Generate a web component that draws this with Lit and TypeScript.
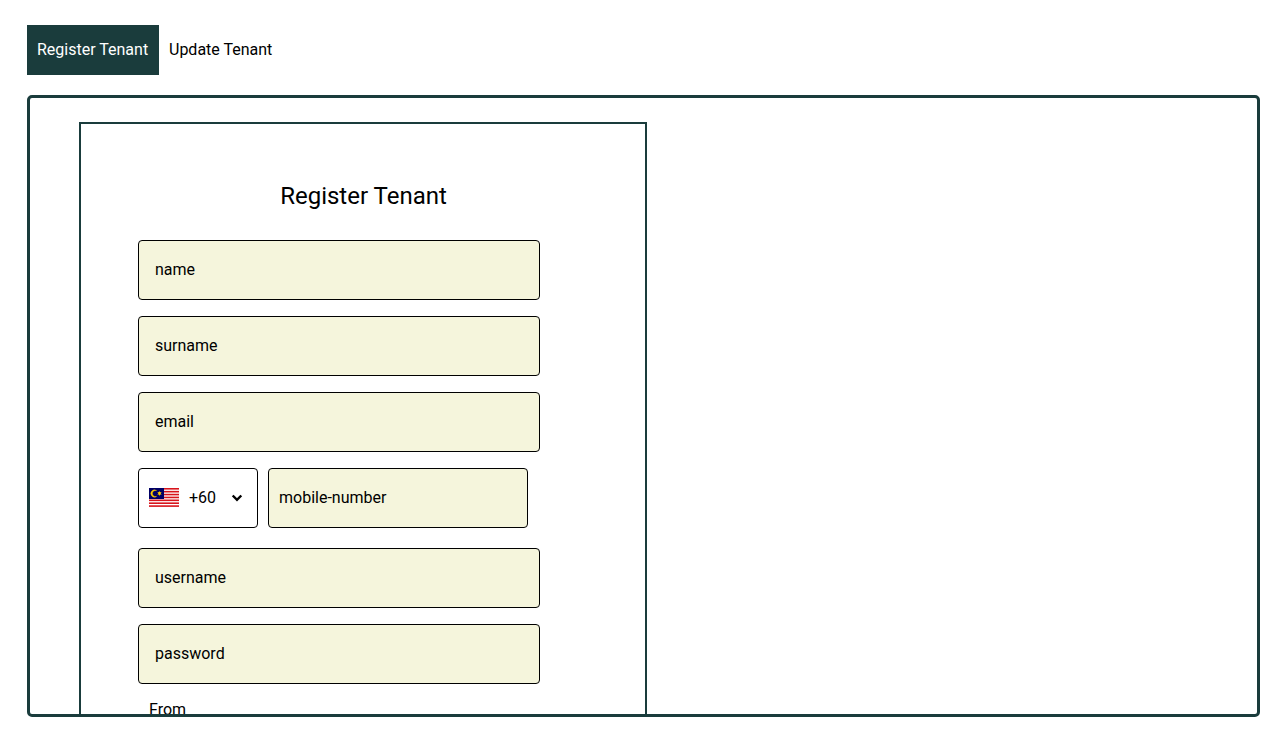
import { LitElement, html, css, svg } from "lit";
import { customElement, state } from "lit/decorators.js";

@customElement("app-root")
export class AppRoot extends LitElement {
  @state() private tab = "Register Tenant";

  static styles = css`
    :host { display: block; box-sizing: border-box; height: 730px; padding: 25px 27px 13px; overflow: hidden; background: #fff; color: #000; font: 16px/19px Roboto, sans-serif; }
    * { box-sizing: border-box; }
    .tabs { display: flex; height: 50px; margin-bottom: 20px; }
    .tab { border: 0; background: none; font: inherit; color: inherit; text-align: left; padding: 0 10px 2px; white-space: nowrap; }
    .tab.active { background: #1a3c3c; color: #fff; width: 132px; }
    .panel { height: 622px; border: 3px solid #1a3c3c; border-radius: 5px; overflow: hidden; padding: 24px 49px 0; }
    .form { width: 568px; height: 900px; border: 2px solid #1a3c3c; padding: 57px 57px 0; }
    .title { margin: 0 0 28px; padding-left: 1px; text-align: center; font-size: 24px; line-height: 31px; font-weight: 400; }
    .field { display: block; width: 402px; height: 60px; margin-bottom: 16px; padding: 0 16px 2px; border: 1px solid #000; border-radius: 4px; background: #f5f5dc; font: inherit; color: #000; }
    .field::placeholder { color: #000; opacity: 1; }
    .phone { display: flex; gap: 10px; margin-bottom: 20px; }
    .code { display: flex; align-items: center; width: 120px; height: 60px; padding: 0 10px 2px; border: 1px solid #000; border-radius: 4px; background: #fff; font: inherit; color: #000; }
    .flag { width: 30px; height: 19px; margin-right: 10px; }
    .chevron { width: 12px; height: 8px; margin: 2px 0 0 15px; }
    .mobile { width: 260px; margin: 0; padding: 0 10px 2px; }
    .from { display: block; padding-left: 11px; }
  `;

  private field(name: string, type = "text") {
    return html`<input class="field" type=${type} placeholder=${name} />`;
  }

  render() {
    return html`
      <nav class="tabs">
        ${["Register Tenant", "Update Tenant"].map(
          (t) => html`<button class="tab ${this.tab === t ? "active" : ""}" @click=${() => (this.tab = t)}>${t}</button>`
        )}
      </nav>
      <main class="panel">
        <form class="form">
          <h1 class="title">Register Tenant</h1>
          ${this.field("name")} ${this.field("surname")} ${this.field("email")}
          <div class="phone">
            <button class="code" type="button">
              <svg class="flag" viewBox="0 0 30 19">
                <rect width="30" height="19" fill="#fff" />
                ${[0, 1, 2, 3, 4, 5, 6].map((i) => svg`<rect y=${i * 2.88} width="30" height="1.6" fill="#d8141c" />`)}
                <rect width="15" height="11" fill="#006" />
                <path d="M7.6 2.6A3.6 3.6 0 1 0 7.6 8.4A3.1 3.1 0 1 1 7.6 2.6Z" fill="#fc0" stroke="#fc0" stroke-width="0.4" />
                <path d="M10.5 2.9L11.1 4.3L12.6 4L11.7 5.4L12.6 6.8L11.1 6.6L10.5 8L9.9 6.6L8.4 6.8L9.3 5.4L8.4 4L9.9 4.3Z" fill="#fc0" />
              </svg>
              <span>+60</span>
              <svg class="chevron" viewBox="0 0 12 8"><path d="M1.7 1.5L6 5.8L10.3 1.5" fill="none" stroke="#000" stroke-width="2.4" /></svg>
            </button>
            <input class="field mobile" type="tel" placeholder="mobile-number" />
          </div>
          ${this.field("username")} ${this.field("password", "password")}
          <label class="from">From</label>
        </form>
      </main>
    `;
  }
}
